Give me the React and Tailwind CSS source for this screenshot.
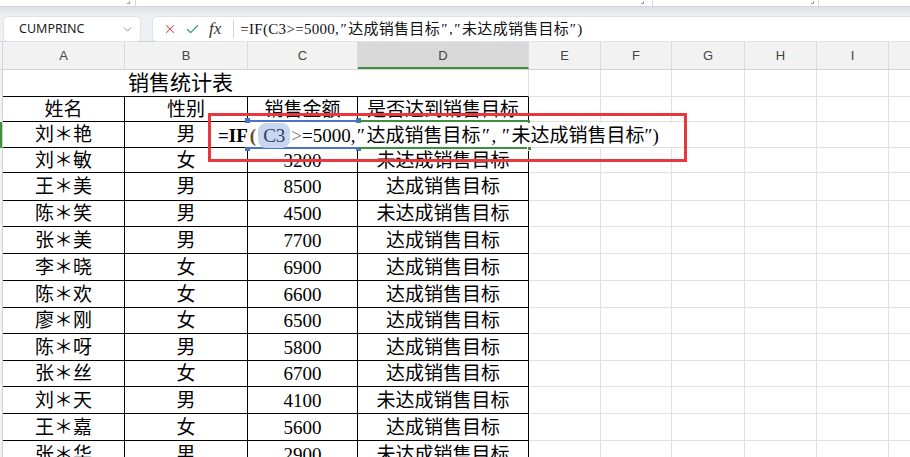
import { X, Check, ChevronDown } from 'lucide-react';

const FONT = "font-['Liberation_Serif','Noto_Sans_CJK_SC',serif]";

const colW = ['w-[122px]', 'w-[123px]', 'w-[110px]', 'w-[171px]', 'w-[72px]', 'w-[71px]', 'w-[73px]', 'w-[72px]', 'w-[72px]'];
const letters = ['A', 'B', 'C', 'D', 'E', 'F', 'G', 'H', 'I'];

const rows = [
  { h: 'h-[25px]', cells: ['姓名', '性别', '销售金额', '是否达到销售目标'] },
  { h: 'h-[26px]', cells: ['刘＊艳', '男', '', ''] },
  { h: 'h-[25px]', cells: ['刘＊敏', '女', '3200', '未达成销售目标'] },
  { h: 'h-[28px]', cells: ['王＊美', '男', '8500', '达成销售目标'] },
  { h: 'h-[26px]', cells: ['陈＊笑', '男', '4500', '未达成销售目标'] },
  { h: 'h-[27px]', cells: ['张＊美', '男', '7700', '达成销售目标'] },
  { h: 'h-[27px]', cells: ['李＊晓', '女', '6900', '达成销售目标'] },
  { h: 'h-[27px]', cells: ['陈＊欢', '女', '6600', '达成销售目标'] },
  { h: 'h-[26px]', cells: ['廖＊刚', '女', '6500', '达成销售目标'] },
  { h: 'h-[27px]', cells: ['陈＊呀', '男', '5800', '达成销售目标'] },
  { h: 'h-[26px]', cells: ['张＊丝', '女', '6700', '达成销售目标'] },
  { h: 'h-[27px]', cells: ['刘＊天', '男', '4100', '未达成销售目标'] },
  { h: 'h-[27px]', cells: ['王＊嘉', '女', '5600', '达成销售目标'] },
  { h: 'h-[27px]', cells: ['张＊华', '男', '2900', '未达成销售目标'] },
];

function Sliver({ active }) {
  return (
    <div className={`w-[3px] shrink-0 border-r border-r-[#cfcfcf] ${active ? 'bg-[#3f8f3f]' : 'bg-[#f3f3f3]'}`} />
  );
}

function GrayCells() {
  return (
    <>
      {colW.slice(4).map((w, i) => (
        <div key={i} className={`${w} shrink-0 border-r border-b border-[#e1e1e1]`} />
      ))}
      <div className="flex-1 border-b border-[#e1e1e1]" />
    </>
  );
}

function Q({ w = 'w-[11px]' }) {
  return <span className={`inline-block ${w} text-center`}>″</span>;
}

export default function App() {
  return (
    <div className={`relative w-[910px] h-[457px] overflow-hidden bg-white text-black ${FONT}`}>
      {/* ribbon remnant */}
      <div className="relative h-[6px] bg-white">
        <div className="absolute left-[127px] top-[1px] w-[3px] h-[3px] border-r border-b border-[#9aa0a6]" />
        <div className="absolute left-[135px] top-0 h-[6px] w-px bg-[#d6d9dd]" />
        <div className="absolute left-[641px] top-[1px] w-[3px] h-[3px] border-r border-b border-[#9aa0a6]" />
        <div className="absolute left-[652px] top-0 h-[6px] w-px bg-[#d6d9dd]" />
        <div className="absolute left-[811px] top-[1px] w-[3px] h-[3px] border-r border-b border-[#9aa0a6]" />
        <div className="absolute left-[818px] top-0 h-[6px] w-px bg-[#d6d9dd]" />
      </div>

      {/* formula bar */}
      <div className="h-[36px] flex gap-[11px] pt-[9px] pl-[3px] border-t border-[#d3d7dc] bg-linear-to-b from-[#dde1e6] from-0% to-[#eef0f3] to-25% border-b border-b-[#d4d4d4]">
        <div className="w-[138px] h-[26px] rounded-[5px] bg-white border border-[#dfe2e6] flex items-center pl-[15px] pr-[6px] font-['Noto_Sans',sans-serif] text-[12.5px] text-[#222]">
          <span className="flex-1">CUMPRINC</span>
          <ChevronDown size={13} strokeWidth={1.5} className="text-[#777]" />
        </div>
        <div className="flex-1 h-[26px] rounded-l-[5px] bg-white border border-r-0 border-[#dfe2e6] flex items-center pl-[10px]">
          <X size={14} strokeWidth={1.8} className="text-[#e0424a]" />
          <Check size={15} strokeWidth={1.8} className="ml-[8px] text-[#2f9a5e]" />
          <span className="ml-[9px] italic text-[17px] text-[#333] font-['Liberation_Serif',serif]">fx</span>
          <div className="ml-[12px] w-px h-[18px] bg-[#d5d5d5]" />
          <span className="ml-[6px] text-[15px] tracking-[0.3px] text-[#111] whitespace-nowrap">
            =IF(C3&gt;=5000,<Q w="w-[9px]" />达成销售目标<Q w="w-[9px]" />,<Q w="w-[9px]" />未达成销售目标<Q w="w-[8px]" />)
          </span>
        </div>
      </div>

      {/* column headers */}
      <div className="flex h-[28px] bg-[#f2f2f2] border-b border-[#d4d4d4] font-['Liberation_Sans',sans-serif] text-[13px] text-[#444]">
        <div className="w-[3px] shrink-0 border-r border-[#d4d4d4]" />
        {colW.map((w, i) => (
          <div
            key={letters[i]}
            className={`${w} shrink-0 flex items-center justify-center border-r border-[#dadada] ${i === 3 ? 'bg-[#d9d9d9] border-b-2 border-b-[#3f8f3f] pt-[2px]' : ''}`}
          >
            {letters[i]}
          </div>
        ))}
        <div className="flex-1" />
      </div>

      {/* title row */}
      <div className="flex h-[27px]">
        <Sliver />
        <div className="w-[355px] shrink-0 border-b border-black flex items-center justify-center text-[21px] leading-none">销售统计表</div>
        <div className="w-[171px] shrink-0 border-b border-b-black border-r border-r-[#e1e1e1]" />
        <GrayCells />
      </div>

      {rows.map((r, ri) => (
        <div key={ri} className={`flex ${r.h}`}>
          <Sliver active={ri === 1} />
          {r.cells.map((c, ci) => (
            <div
              key={ci}
              className={`${colW[ci]} shrink-0 border-r border-b border-black flex items-center justify-center text-[19px] leading-none whitespace-nowrap`}
            >
              {c}
            </div>
          ))}
          <GrayCells />
        </div>
      ))}

      {/* reference highlight on C3 */}
      <div className="absolute left-[247px] top-[120px] w-[112px] h-[29px] border-2 border-[#4a72c9]">
        <div className="absolute -left-[4px] -top-[4px] w-[5px] h-[5px] bg-[#4a72c9]" />
        <div className="absolute -right-[4px] -top-[4px] w-[5px] h-[5px] bg-[#4a72c9]" />
        <div className="absolute -left-[4px] -bottom-[4px] w-[5px] h-[5px] bg-[#4a72c9]" />
        <div className="absolute -right-[4px] -bottom-[4px] w-[5px] h-[5px] bg-[#4a72c9]" />
      </div>

      {/* active cell D3 */}
      <div className="absolute left-[358px] top-[120px] w-[172px] h-[29px] border-y-2 border-r-2 border-[#3f8f3f]">
        <div className="absolute -right-[4px] -bottom-[4px] w-[5px] h-[5px] bg-[#3f8f3f] border border-white" />
      </div>

      {/* in-cell editor */}
      <div className="absolute left-[212px] top-[123px] w-[460px] h-[24px] bg-white flex items-center pl-[6px] text-[19px] leading-none whitespace-nowrap">
        <span className="font-bold">=IF</span>
        <span className="font-bold text-[#6b4a1f] ml-[2px]">(</span>
        <span className="ml-[2px] rounded-[8px] bg-[#c8d7f1] px-[5px] py-[3px] text-[#2f3d5c]">C3</span>
        <span className="text-[#777] ml-[1px]">&gt;</span>
        <span>=5000,</span>
        <Q />
        <span>达成销售目标</span>
        <Q />
        <span className="inline-block w-[9px]">,</span>
        <Q />
        <span>未达成销售目标</span>
        <Q w="w-[8px]" />
        <span>)</span>
      </div>

      {/* annotation box */}
      <div className="absolute left-[208px] top-[113px] w-[479px] h-[49px] border-[3px] border-[#e8383d]" />
    </div>
  );
}
